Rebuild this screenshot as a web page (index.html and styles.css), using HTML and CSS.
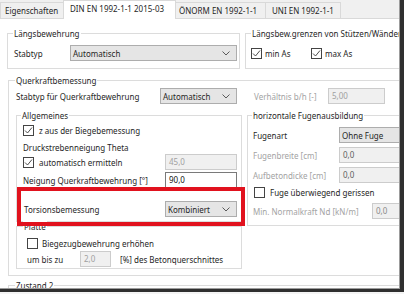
FILE: index.html
```html
<!DOCTYPE html>
<html lang="de">
<head>
<meta charset="utf-8">
<link rel="stylesheet" href="styles.css">
</head>
<body>
<div class="frame">
<div class="window">
  <div class="tabs">
    <div class="tab t1">Eigenschaften</div>
    <div class="tab active t2">DIN EN 1992-1-1 2015-03</div>
    <div class="tab t3">ÖNORM EN 1992-1-1</div>
    <div class="tab t4">UNI EN 1992-1-1</div>
  </div>
  <div class="panel">
    <div class="row-top">
      <div class="group g-laengs">
        <div class="legend">Längsbewehrung</div>
        <div class="line l-stab">
          <span class="lbl w-stab">Stabtyp</span>
          <div class="select s-auto"><span>Automatisch</span><svg class="chev" width="8" height="5" viewBox="0 0 8 5"><polyline points="0.5,0.5 4,4 7.5,0.5" fill="none" stroke="#5a5a5a" stroke-width="1"/></svg></div>
        </div>
      </div>
      <div class="group g-grenzen">
        <div class="legend">Längsbew.grenzen von Stützen/Wänden</div>
        <div class="line l-cbs">
          <span class="cb"><svg width="9" height="9" viewBox="0 0 9 9"><polyline points="1,4.5 3.5,7 8,1.5" fill="none" stroke="#3a3a3a" stroke-width="0.9"/></svg></span>
          <span class="cbtext w-min">min As</span>
          <span class="cb"><svg width="9" height="9" viewBox="0 0 9 9"><polyline points="1,4.5 3.5,7 8,1.5" fill="none" stroke="#3a3a3a" stroke-width="0.9"/></svg></span>
          <span class="cbtext">max As</span>
        </div>
      </div>
    </div>

    <div class="group g-quer">
      <div class="legend lg-quer">Querkraftbemessung</div>
      <div class="line l-quer">
        <span class="lbl w-quer">Stabtyp für Querkraftbewehrung</span>
        <div class="select s-quer"><span>Automatisch</span><svg class="chev" width="8" height="5" viewBox="0 0 8 5"><polyline points="0.5,0.5 4,4 7.5,0.5" fill="none" stroke="#5a5a5a" stroke-width="1"/></svg></div>
        <span class="lbl dis w-verh">Verhältnis b/h [-]</span>
        <div class="input i-verh">5,00</div>
      </div>

      <div class="cols">
        <div class="col-left">
          <div class="group g-allg">
            <div class="legend lg-allg">Allgemeines</div>
            <div class="line r-a">
              <span class="cb"><svg width="9" height="9" viewBox="0 0 9 9"><polyline points="1,4.5 3.5,7 8,1.5" fill="none" stroke="#3a3a3a" stroke-width="0.9"/></svg></span>
              <span class="cbtext">z aus der Biegebemessung</span>
            </div>
            <div class="line r-b"><span class="lbl">Druckstrebenneigung Theta</span></div>
            <div class="line r-c">
              <div class="lbl w-left cbwrap">
                <span class="cb"><svg width="9" height="9" viewBox="0 0 9 9"><polyline points="1,4.5 3.5,7 8,1.5" fill="none" stroke="#3a3a3a" stroke-width="0.9"/></svg></span>
                <span class="cbtext">automatisch ermitteln</span>
              </div>
              <div class="input i-left">45,0</div>
            </div>
            <div class="line r-d">
              <span class="lbl w-left">Neigung Querkraftbewehrung [°]</span>
              <div class="input on i-left">90,0</div>
            </div>
            <div class="line r-e">
              <span class="lbl w-tors">Torsionsbemessung</span>
              <div class="select s-tors"><span>Kombiniert</span><svg class="chev" width="8" height="5" viewBox="0 0 8 5"><polyline points="0.5,0.5 4,4 7.5,0.5" fill="none" stroke="#5a5a5a" stroke-width="1"/></svg></div>
            </div>
          </div>
          <div class="group g-platte">
            <div class="legend lg-platte">Platte</div>
            <div class="line r-f">
              <span class="cb"></span>
              <span class="cbtext">Biegezugbewehrung erhöhen</span>
            </div>
            <div class="line r-g">
              <span class="lbl w-um">um bis zu</span>
              <div class="input i-um">2,0</div>
              <span class="lbl pct">[%] des Betonquerschnittes</span>
            </div>
          </div>
        </div>

        <div class="group g-fugen">
          <div class="legend lg-fugen">horizontale Fugenausbildung</div>
          <div class="line f-1">
            <span class="lbl w-fug">Fugenart</span>
            <div class="select s-fug"><span>Ohne Fuge</span></div>
          </div>
          <div class="line f-2">
            <span class="lbl dis w-fug">Fugenbreite [cm]</span>
            <div class="input i-fug">0,0</div>
          </div>
          <div class="line f-3">
            <span class="lbl dis w-fug">Aufbetondicke [cm]</span>
            <div class="input i-fug">0,0</div>
          </div>
          <div class="line f-4">
            <span class="cb cb-fug"></span>
            <span class="cbtext">Fuge überwiegend gerissen</span>
          </div>
          <div class="line f-5">
            <span class="lbl dis w-nd">Min. Normalkraft Nd [kN/m]</span>
            <div class="input i-nd">0,0</div>
          </div>
        </div>
      </div>
    </div>

    <div class="group g-zustand">
      <div class="legend lg-quer">Zustand 2</div>
    </div>
  </div>
  <div class="annot"></div>
</div>
</div>
</body>
</html>
```

FILE: styles.css
```css
* { box-sizing: border-box; }
html, body { margin: 0; padding: 0; }
body {
  width: 404px;
  height: 294px;
  overflow: hidden;
  background: #f4f4f4;
  font-family: "Noto Sans", "Liberation Sans", sans-serif;
  font-size: 8px;
  color: #262626;
}
.frame {
  width: 404px;
  height: 292px;
  border-right: 4px solid #2f2f2f;
  border-bottom: 3px solid #2f2f2f;
}
.window {
  position: relative;
  width: 400px;
  height: 289px;
  border-right: 1px solid #9c9c9c;
  border-bottom: 1px solid #9c9c9c;
  background: #fff;
  overflow: hidden;
}

/* tabs */
.tabs {
  display: flex;
  align-items: flex-end;
  height: 19px;
  background: #f0f0f0;
  border-bottom: 1px solid #d9d9d9;
}
.tab {
  height: 16px;
  border: 1px solid #d9d9d9;
  border-bottom: none;
  background: #f0f0f0;
  line-height: 15px;
  white-space: nowrap;
  margin-right: -1px;
  overflow: hidden;
}
.tab.active {
  position: relative;
  z-index: 1;
  height: 19px;
  margin-bottom: -1px;
  background: #fff;
  line-height: 15px;
}
.t1 { width: 64px; padding-left: 4px; }
.t2 { width: 113px; padding-left: 6px; }
.t3 { width: 91px; padding-left: 3px; }
.t4 { width: 76px; padding-left: 6px; }

/* panel */
.panel { padding: 14px 0 0 7px; }
.row-top { display: flex; gap: 5px; }

.group { border: 1px solid #dcdcdc; flex: none; }
.legend {
  width: max-content;
  height: 11px;
  line-height: 11px;
  margin: -6px 0 0 5px;
  padding: 0 1px;
  background: #fff;
  white-space: nowrap;
}
.line { display: flex; align-items: center; }
.lbl { white-space: nowrap; flex: none; }
.dis { color: #a3a3a3; }

.select {
  display: flex;
  align-items: center;
  justify-content: space-between;
  height: 16px;
  background: #e5e5e5;
  border: 1px solid #adadad;
  padding: 0 6px 0 2px;
  flex: none;
  white-space: nowrap;
}
.chev { display: block; }
.input {
  height: 16px;
  line-height: 14px;
  border: 1px solid #cccccc;
  background: #f0f0f0;
  color: #a0a0a0;
  padding-left: 3px;
  flex: none;
}
.input.on { background: #fff; border-color: #7a7a7a; color: #111; }

.cb {
  width: 11px;
  height: 11px;
  border: 1px solid #444;
  background: #fff;
  flex: none;
  display: flex;
  align-items: center;
  justify-content: center;
}
.cb svg { display: block; }
.cbtext { white-space: nowrap; margin-left: 5px; }

/* Längsbewehrung */
.g-laengs { width: 233px; height: 36px; }
.l-stab { margin-top: 6px; padding-left: 6px; }
.w-stab { width: 56px; }
.s-auto { width: 167px; }

.g-grenzen { width: 200px; height: 36px; }
.l-cbs { margin-top: 8px; height: 13px; padding-left: 5px; }
.w-min { width: 46px; margin-left: 3px; }
.l-cbs .cbtext { margin-left: 3px; }

/* Querkraft */
.g-quer { width: 420px; height: 196px; margin: 11px 0 0 1px; }
.lg-quer { margin-left: 6px; }
.l-quer { margin-top: 2px; padding-left: 7px; }
.w-quer { width: 144px; }
.s-quer { width: 77px; }
.w-verh { width: 74px; margin-left: 17px; }
.i-verh { width: 57px; }

.cols { display: flex; gap: 5px; margin-top: 11px; padding-left: 7px; }
.col-left { width: 226px; flex: none; display: flex; flex-direction: column; }

.g-allg { width: 226px; padding-bottom: 4px; }
.lg-allg { margin-left: 4px; }
.g-allg .line { padding-left: 6px; }
.r-a { margin-top: 2px; height: 15px; }
.r-b { margin-top: 2px; height: 14px; }
.r-c { height: 16px; }
.r-d { margin-top: 2px; height: 16px; }
.r-e { margin-top: 13px; height: 16px; }
.cbwrap { display: flex; align-items: center; }
.w-left { width: 142px; }
.i-left { width: 72px; }
.w-tors { width: 141px; margin-left: 1px; }
.s-tors { width: 72px; }

.g-platte { width: 226px; margin-top: 4px; height: 43px; }
.lg-platte { margin-left: 6px; }
.r-f { margin-top: 4px; height: 14px; padding-left: 10px; }
.r-f .cbtext { margin-left: 4px; }
.r-g { margin-top: 1px; height: 16px; padding-left: 10px; }
.w-um { width: 53px; }
.i-um { width: 31px; }
.pct { margin-left: 9px; }

.g-fugen { width: 200px; height: 111px; }
.lg-fugen { margin-left: 4px; }
.g-fugen .line { padding-left: 5px; }
.f-1 { margin-top: 6px; height: 16px; }
.f-2 { margin-top: 4px; height: 16px; }
.f-3 { margin-top: 4px; height: 16px; }
.f-4 { margin-top: 2px; height: 14px; }
.cb-fug { margin-left: 1px; }
.f-5 { margin-top: 4px; height: 16px; }
.w-fug { width: 86px; }
.s-fug { width: 80px; }
.i-fug { width: 80px; color: #5e5e5e; }
.w-nd { width: 119px; }
.i-nd { width: 40px; color: #8a8a8a; }

.g-zustand { width: 420px; height: 20px; margin: 9px 0 0 1px; }

/* red annotation frame */
.annot {
  position: absolute;
  left: 17px;
  top: 187px;
  width: 228px;
  height: 39px;
  border: 4px solid #e1121e;
}
```
